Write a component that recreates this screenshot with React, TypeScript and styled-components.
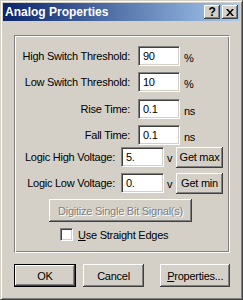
import React from "react";
import styled, { createGlobalStyle } from "styled-components";

const GlobalStyle = createGlobalStyle`
  html, body {
    margin: 0;
    padding: 0;
    background: #d4d0c8;
  }
  body {
    font-family: "Liberation Sans", Arial, sans-serif;
    font-size: 11px;
    letter-spacing: -0.25px;
    color: #000;
  }
`;

const face = "#d4d0c8";

const Window = styled.div`
  width: 243px;
  height: 300px;
  box-sizing: border-box;
  background: ${face};
  border-top: 1px solid ${face};
  border-left: 1px solid ${face};
  border-right: 1px solid #404040;
  border-bottom: 1px solid #404040;
  box-shadow: inset 1px 1px #fff, inset -1px -1px #808080;
  padding: 2px;
  display: flex;
  flex-direction: column;
`;

const TitleBar = styled.div`
  height: 18px;
  display: flex;
  align-items: center;
  padding: 0 2px 0 2px;
  background: linear-gradient(to right, #0a246a 0%, #a6caf0 100%);
`;

const Title = styled.div`
  flex: 1;
  color: #fff;
  font-weight: bold;
  font-size: 12px;
  letter-spacing: 0;
  white-space: nowrap;
`;

const CaptionButton = styled.div`
  width: 16px;
  height: 14px;
  box-sizing: border-box;
  background: ${face};
  box-shadow: inset -1px -1px #404040, inset 1px 1px #fff,
    inset -2px -2px #808080, inset 2px 2px ${face};
  display: flex;
  align-items: center;
  justify-content: center;
  margin-left: 2px;
  font-weight: bold;
  font-size: 12px;
  line-height: 1;
`;

const Body = styled.div`
  flex: 1;
  padding: 14px 10px 0 11px;
`;

const GroupBox = styled.div`
  width: 216px;
  height: 218px;
  box-sizing: border-box;
  border: 1px solid #808080;
  border-right-color: #fff;
  border-bottom-color: #fff;
  box-shadow: inset 1px 1px #fff, inset -1px -1px #808080;
  padding: 10px 0 0 1px;
  display: flex;
  flex-direction: column;
`;

const Row = styled.div<{ $top: number }>`
  display: flex;
  align-items: center;
  margin-top: ${(p) => p.$top}px;
  height: 20px;
`;

const Label = styled.div<{ $width: number; $gap: number }>`
  width: ${(p) => p.$width}px;
  margin-right: ${(p) => p.$gap}px;
  text-align: right;
  white-space: nowrap;
`;

const Field = styled.div<{ $width: number }>`
  width: ${(p) => p.$width}px;
  height: 20px;
  box-sizing: border-box;
  background: #fff;
  border-top: 1px solid #808080;
  border-left: 1px solid #808080;
  border-right: 1px solid #fff;
  border-bottom: 1px solid #fff;
  box-shadow: inset 1px 1px #404040, inset -1px -1px ${face};
  padding: 3px 0 0 4px;
  white-space: nowrap;
`;

const Unit = styled.div<{ $gap: number; $drop: number }>`
  margin-left: ${(p) => p.$gap}px;
  padding-top: ${(p) => p.$drop}px;
  white-space: nowrap;
`;

const Button = styled.div<{
  $width: number;
  $height: number;
  $disabled?: boolean;
  $default?: boolean;
}>`
  width: ${(p) => p.$width}px;
  height: ${(p) => p.$height}px;
  box-sizing: border-box;
  background: ${face};
  display: flex;
  align-items: center;
  justify-content: center;
  white-space: nowrap;
  color: ${(p) => (p.$disabled ? "#808080" : "#000")};
  text-shadow: ${(p) => (p.$disabled ? "1px 1px #fff" : "none")};
  border: ${(p) => (p.$default ? "1px solid #000" : "none")};
  box-shadow: inset -1px -1px #404040, inset 1px 1px #fff,
    inset -2px -2px #808080, inset 2px 2px ${face};
`;

const SideButton = styled(Button)`
  margin-left: auto;
  margin-right: 6px;
`;

const CenterRow = styled.div<{ $top: number; $left: number }>`
  display: flex;
  align-items: center;
  margin-top: ${(p) => p.$top}px;
  padding-left: ${(p) => p.$left}px;
`;

const CheckBox = styled.div`
  width: 13px;
  height: 13px;
  box-sizing: border-box;
  background: #fff;
  border-top: 1px solid #808080;
  border-left: 1px solid #808080;
  border-right: 1px solid #fff;
  border-bottom: 1px solid #fff;
  box-shadow: inset 1px 1px #404040, inset -1px -1px ${face};
  margin-right: 5px;
`;

const Footer = styled.div`
  display: flex;
  margin-top: 11px;
`;

const FooterButton = styled(Button)<{ $gap: number }>`
  margin-left: ${(p) => p.$gap}px;
`;

const Accel = styled.span`
  text-decoration: underline;
`;

type Setting = { label: string; value: string; unit: string; top: number };

const timing: Setting[] = [
  { label: "High Switch Threshold:", value: "90", unit: "%", top: 0 },
  { label: "Low Switch Threshold:", value: "10", unit: "%", top: 6 },
  { label: "Rise Time:", value: "0.1", unit: "ns", top: 7 },
  { label: "Fall Time:", value: "0.1", unit: "ns", top: 6 },
];

const voltages = [
  { label: "Logic High Voltage:", value: "5.", action: "Get max", top: 2 },
  { label: "Logic Low Voltage:", value: "0.", action: "Get min", top: 6 },
];

export default function App() {
  return (
    <>
      <GlobalStyle />
      <Window>
        <TitleBar>
          <Title>Analog Properties</Title>
          <CaptionButton>?</CaptionButton>
          <CaptionButton>
            <svg width="8" height="7" viewBox="0 0 8 7">
              <path d="M0 0h2l2 2.5L6 0h2L5 3.5 8 7H6L4 4.5 2 7H0l3-3.5z" fill="#000" />
            </svg>
          </CaptionButton>
        </TitleBar>
        <Body>
          <GroupBox>
            {timing.map((s) => (
              <Row key={s.label} $top={s.top}>
                <Label $width={114} $gap={8}>
                  {s.label}
                </Label>
                <Field $width={42}>{s.value}</Field>
                <Unit $gap={4} $drop={4}>
                  {s.unit}
                </Unit>
              </Row>
            ))}
            {voltages.map((v) => (
              <Row key={v.label} $top={v.top}>
                <Label $width={99} $gap={6}>
                  {v.label}
                </Label>
                <Field $width={43}>{v.value}</Field>
                <Unit $gap={3} $drop={1}>
                  v
                </Unit>
                <SideButton $width={47} $height={21}>
                  {v.action}
                </SideButton>
              </Row>
            ))}
            <CenterRow $top={6} $left={33}>
              <Button $width={143} $height={23} $disabled>
                Digitize Single Bit Signal(s)
              </Button>
            </CenterRow>
            <CenterRow $top={6} $left={44}>
              <CheckBox />
              <span>
                <Accel>U</Accel>se Straight Edges
              </span>
            </CenterRow>
          </GroupBox>
          <Footer>
            <FooterButton $gap={0} $width={62} $height={23} $default>
              OK
            </FooterButton>
            <FooterButton $gap={7} $width={62} $height={23}>
              Cancel
            </FooterButton>
            <FooterButton $gap={16} $width={70} $height={23}>
              <span>
                <Accel>P</Accel>roperties...
              </span>
            </FooterButton>
          </Footer>
        </Body>
      </Window>
    </>
  );
}
